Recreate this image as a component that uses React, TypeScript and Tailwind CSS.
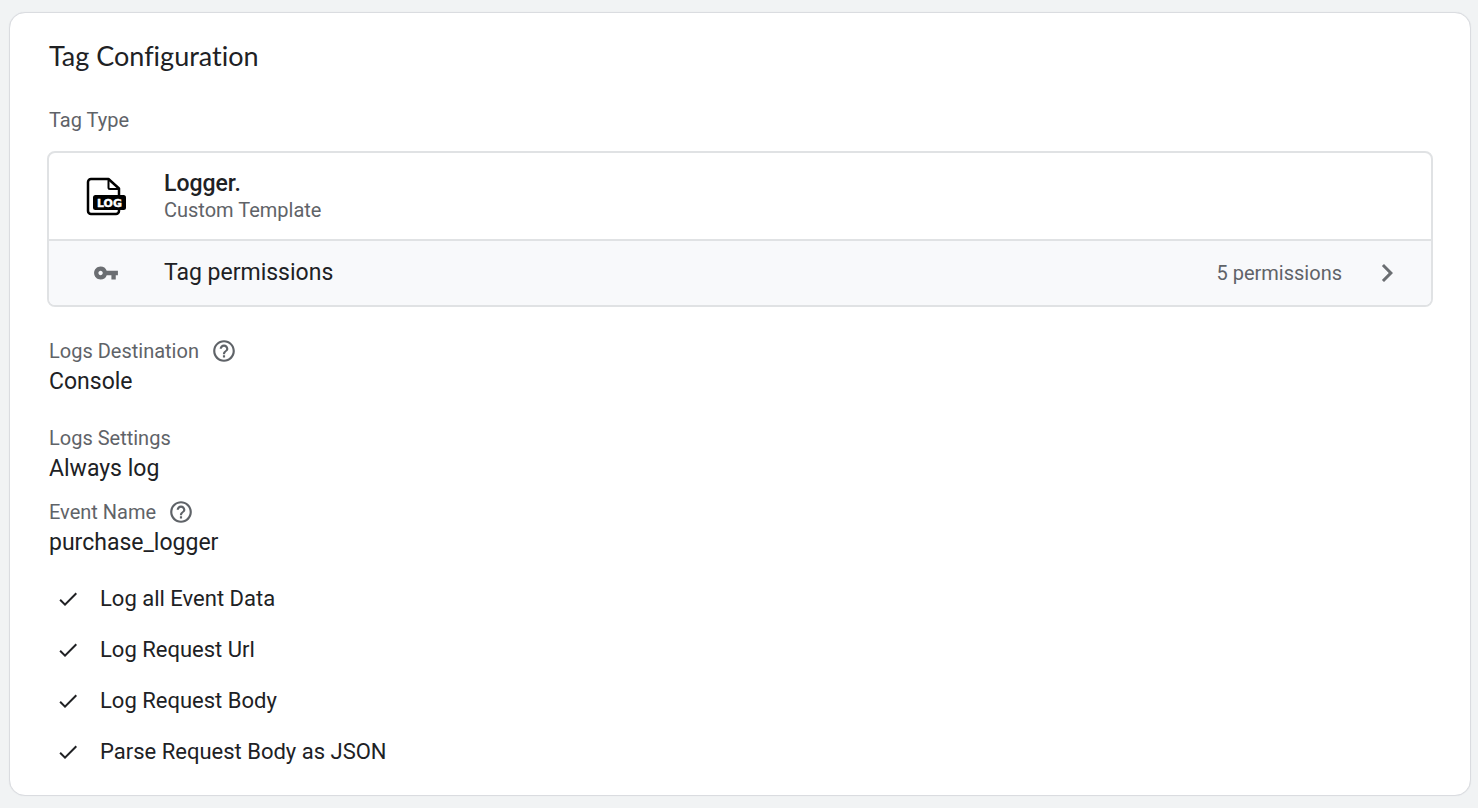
import type { ReactNode } from "react";
import { MdCheck, MdChevronRight, MdHelpOutline, MdVpnKey } from "react-icons/md";

const loggedItems = [
  "Log all Event Data",
  "Log Request Url",
  "Log Request Body",
  "Parse Request Body as JSON",
];

const LogFileIcon = () => (
  <svg className="h-10 w-10" viewBox="0 0 40 40" fill="none" aria-hidden="true">
    <path
      d="M33 20V12.500L22.500 3H5a3 3 0 0 0-3 3v29a3 3 0 0 0 3 3h25a3 3 0 0 0 3-3v-2"
      stroke="#000"
      strokeWidth="2.5"
      strokeLinejoin="round"
    />
    <path d="M22.500 3v8.500a1.500 1.500 0 0 0 1.500 1.500h9" stroke="#000" strokeWidth="2" strokeLinejoin="round" />
    <rect x="7" y="19" width="33" height="15" rx="2.500" fill="#000" />
    <text
      x="23.500"
      y="30.500"
      textAnchor="middle"
      fill="#fff"
      stroke="#fff"
      strokeWidth="0.4"
      fontSize="11"
      fontWeight="700"
      fontFamily="'DejaVu Sans', sans-serif"
    >
      LOG
    </text>
  </svg>
);

type FieldProps = {
  label: string;
  hasHelp?: boolean;
  className?: string;
  children: ReactNode;
};

const Field = ({ label, hasHelp = false, className = "", children }: FieldProps) => (
  <div className={className}>
    <dt className="flex h-[30px] items-center gap-3 text-[20px] text-[#5f6368]">
      {label}
      {hasHelp && (
        <button type="button" aria-label={`Help for ${label}`} className="cursor-pointer">
          <MdHelpOutline className="h-[26px] w-[26px]" />
        </button>
      )}
    </dt>
    <dd className="text-[23px] leading-8">{children}</dd>
  </div>
);

const App = () => {
  return (
    <div className="min-h-screen bg-[#f1f3f4] py-3 pr-[7px] pl-[9px] font-['Roboto',sans-serif] text-[#202124]">
      <section className="rounded-2xl border border-[#dadce0] bg-white px-[37px] pt-[27px] pb-[18px] shadow-[0_0_1px_#dadce0]">
        <h2 className="pl-[2px] font-['Lato',sans-serif] text-[27px] leading-8 [font-variant-ligatures:none]">
          Tag Configuration
        </h2>

        <h3 className="mt-[33px] pl-[2px] text-[20px] leading-[30px] text-[#5f6368]">Tag Type</h3>
        <div className="mt-4 overflow-hidden rounded-lg border-2 border-[#e0e2e4]">
          <div className="flex h-[86px] items-center pl-[37px]">
            <LogFileIcon />
            <div className="ml-[38px]">
              <div className="text-[23px] leading-7 font-medium">Logger.</div>
              <div className="text-[20px] leading-6 text-[#5f6368]">Custom Template</div>
            </div>
          </div>
          <button
            type="button"
            className="flex h-[66px] w-full cursor-pointer items-center border-t-2 border-[#e0e2e4] bg-[#f8f9fb] pr-[26px] pl-11 text-left"
          >
            <MdVpnKey className="h-[26px] w-[26px] text-[#6b6e72]" />
            <span className="ml-[45px] text-[23px] leading-8">Tag permissions</span>
            <span className="ml-auto text-[20px] leading-7 text-[#5f6368]">5 permissions</span>
            <MdChevronRight className="ml-[27px] h-9 w-9 text-[#6b6e72]" />
          </button>
        </div>

        <dl className="mt-[29px] pl-[2px]">
          <Field label="Logs Destination" hasHelp>
            Console
          </Field>
          <Field label="Logs Settings" className="mt-[25px]">
            Always log
          </Field>
          <Field label="Event Name" hasHelp className="mt-3">
            purchase_logger
          </Field>
        </dl>

        <ul className="mt-[14px] pl-[2px]">
          {loggedItems.map((item) => (
            <li key={item} className="flex h-[51px] items-center gap-5 pl-[7px] text-[22px]">
              <MdCheck className="h-6 w-6" />
              {item}
            </li>
          ))}
        </ul>
      </section>
    </div>
  );
};

export default App;
